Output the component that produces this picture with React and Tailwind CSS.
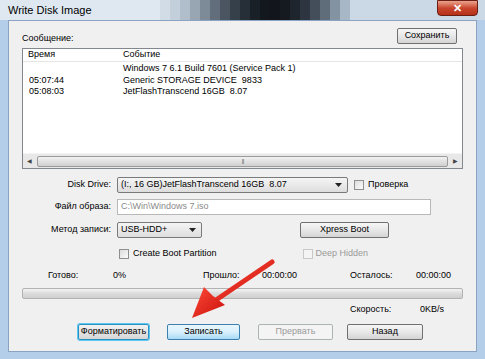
import React from 'react';

const font = { fontFamily: '"Liberation Sans", Arial, sans-serif' };

// glass title bar over a dark desktop, built from thin solid strips
const titleStrips = [
  'bg-[#d2dce7]', 'bg-[#c3cfdb]', 'bg-[#b0bdca]', 'bg-[#98a5b3]', 'bg-[#7d8a98]',
  'bg-[#626e7b]', 'bg-[#4a5561]', 'bg-[#36404a]', 'bg-[#262e37]', 'bg-[#1a2027]',
  'bg-[#13181e]', 'bg-[#12161c]', 'bg-[#151a20]', 'bg-[#1e252d]', 'bg-[#2d3640]',
  'bg-[#434e5a]', 'bg-[#5f6c7a]', 'bg-[#8493a2]', 'bg-[#a8b7c6]',
];

function Btn({ children, className = '', disabled, focused, hot }) {
  let look = 'border-[#707070] bg-gradient-to-b from-[#f6f6f6] via-[#e8e8e8] to-[#d4d4d4] text-black';
  if (disabled) look = 'border-[#adb2b5] bg-[#f4f4f4] text-[#9a9a9a]';
  if (hot) look = 'border-[#3c7fb1] bg-gradient-to-b from-[#eaf6fd] via-[#d9f0fc] to-[#a7d9f5] text-black';
  if (focused) look = 'border-[#2b8fc7] bg-gradient-to-b from-[#f2f2f2] to-[#d6d6d6] text-black ring-1 ring-[#5ec8ee]';
  return (
    <div className={`h-[16px] flex items-center justify-center rounded-[2px] border text-[9px] ${look} ${className}`}>
      {children}
    </div>
  );
}

function Check({ disabled }) {
  return (
    <div className={`w-[10px] h-[10px] border ${disabled ? 'border-[#c8c8c8] bg-[#f4f4f4]' : 'border-[#8e8f8f] bg-gradient-to-br from-[#dcdcdc] to-[#fbfbfb]'}`} />
  );
}

function Caret() {
  return (
    <svg width="7" height="4" viewBox="0 0 7 4"><path d="M0 0h7L3.5 4z" fill="#222" /></svg>
  );
}

export default function App() {
  return (
    <div style={font} className="relative w-[485px] h-[359px] overflow-hidden flex flex-col bg-[#b4cde8] text-black">
      {/* title bar */}
      <div className="h-[20px] shrink-0 flex items-stretch">
        <div className="w-[160px] shrink-0 flex items-center pl-[8px] bg-[#dfe8f1]">
          <span className="text-[11px] text-black whitespace-nowrap">Write Disk Image</span>
        </div>
        {titleStrips.map((c, i) => (
          <div key={i} className={`w-[10px] shrink-0 ${c}`} />
        ))}
        <div className="flex-1 bg-[#cbd9e7]" />
      </div>
      <div className="absolute right-[7px] top-0 w-[41px] h-[16px] rounded-b-[4px] border border-[#6b1e14] bg-gradient-to-b from-[#e9a28f] via-[#c9452d] to-[#b53118] flex items-center justify-center">
        <span className="text-white text-[11px] font-bold leading-none">✕</span>
      </div>

      {/* body */}
      <div className="flex-1 mx-[8px] mb-[7px] bg-[#f0f0f0] border border-[#8aa3c0] pl-[13px] pr-[13px] flex flex-col text-[9px]">
        <div className="mt-[7px] h-[16px] flex items-end justify-between">
          <span className="leading-none mb-[1px]">Сообщение:</span>
          <Btn className="w-[60px] mr-[6px]">Сохранить</Btn>
        </div>

        {/* list */}
        <div className="mt-[4px] h-[121px] border border-[#828790] bg-white flex flex-col">
          <div className="h-[13px] flex items-center border-b border-[#e5e5e5]">
            <span className="w-[100px] pl-[5px]">Время</span>
            <span>Событие</span>
          </div>
          <div className="pt-[1px] flex-1 leading-[11.5px]">
            <div className="flex"><span className="w-[100px] pl-[6px]"></span><span>Windows 7 6.1 Build 7601 (Service Pack 1)</span></div>
            <div className="flex"><span className="w-[100px] pl-[6px]">05:07:44</span><span className="whitespace-pre">Generic STORAGE DEVICE  9833</span></div>
            <div className="flex"><span className="w-[100px] pl-[6px]">05:08:03</span><span className="whitespace-pre">JetFlashTranscend 16GB  8.07</span></div>
          </div>
          <div className="h-[15px] flex items-center bg-[#e8e8e8] border-t border-[#f4f4f4]">
            <span className="w-[13px] text-center text-[6px] text-[#444]">◀</span>
            <div className="flex-1 h-[11px] mx-[1px] rounded-[2px] border border-[#9a9a9a] bg-gradient-to-b from-[#f2f2f2] to-[#d0d0d0] flex items-center justify-center">
              <span className="text-[6px] text-[#777] tracking-[-1px]">|||</span>
            </div>
            <span className="w-[13px] text-center text-[6px] text-[#444]">▶</span>
          </div>
        </div>

        {/* form */}
        <div className="mt-[8px] h-[16px] flex items-center">
          <span className="w-[90px] text-right pr-[1px]">Disk Drive:</span>
          <div className="ml-[5px] w-[231px] h-[16px] border border-[#7a7a7a] rounded-[2px] bg-gradient-to-b from-[#f5f5f5] to-[#dddddd] flex items-center pl-[3px] pr-[5px] justify-between">
            <span className="whitespace-pre">(I:, 16 GB)JetFlashTranscend 16GB  8.07</span>
            <Caret />
          </div>
          <div className="ml-[6px]"><Check /></div>
          <span className="ml-[4px]">Проверка</span>
        </div>

        <div className="mt-[6px] h-[16px] flex items-center">
          <span className="w-[90px] text-right pr-[1px]">Файл образа:</span>
          <div className="ml-[5px] w-[314px] h-[16px] border border-[#b8b8b8] bg-white flex items-center pl-[3px] text-[#8a8a8a]">
            C:\Win\Windows 7.iso
          </div>
        </div>

        <div className="mt-[7px] h-[16px] flex items-center">
          <span className="w-[90px] text-right pr-[1px]">Метод записи:</span>
          <div className="ml-[5px] w-[85px] h-[16px] border border-[#7a7a7a] rounded-[2px] bg-gradient-to-b from-[#f5f5f5] to-[#dddddd] flex items-center pl-[3px] pr-[5px] justify-between">
            <span>USB-HDD+</span>
            <Caret />
          </div>
          <Btn className="ml-[98px] w-[89px] h-[15px]">Xpress Boot</Btn>
        </div>

        <div className="mt-[10px] h-[11px] flex items-center">
          <div className="ml-[97px]"><Check /></div>
          <span className="ml-[4px]">Create Boot Partition</span>
          <div className="ml-[86px]"><Check disabled /></div>
          <span className="ml-[3px] text-[#9a9a9a]">Deep Hidden</span>
        </div>

        {/* status */}
        <div className="mt-[12px] h-[10px] flex items-center">
          <span className="ml-[26px] w-[65px]">Готово:</span>
          <span className="w-[90px]">0%</span>
          <span className="w-[59px]">Прошло:</span>
          <span className="w-[88px]">00:00:00</span>
          <span className="w-[66px]">Осталось:</span>
          <span>00:00:00</span>
        </div>

        <div className="mt-[7px] h-[11px] rounded-[2px] border border-[#b2b2b2] bg-gradient-to-b from-[#f3f3f3] via-[#dcdcdc] to-[#cfcfcf]" />

        <div className="mt-[6px] h-[10px] flex items-center">
          <span className="ml-[328px] w-[70px]">Скорость:</span>
          <span>0KB/s</span>
        </div>

        <div className="mt-[9px] flex items-center">
          <Btn focused className="ml-[56px] w-[71px]">Форматировать</Btn>
          <Btn hot className="ml-[18px] w-[73px]">Записать</Btn>
          <Btn disabled className="ml-[18px] w-[75px]">Прервать</Btn>
          <Btn className="ml-[14px] w-[76px]">Назад</Btn>
        </div>
      </div>

      {/* red arrow overlay */}
      <svg className="absolute left-0 top-0 pointer-events-none" width="485" height="359" viewBox="0 0 485 359">
        <defs>
          <linearGradient id="ar" x1="0" y1="0" x2="1" y2="1">
            <stop offset="0" stopColor="#ff4a3a" />
            <stop offset="1" stopColor="#c8100a" />
          </linearGradient>
        </defs>
        <path d="M272 262 L216 300" stroke="url(#ar)" strokeWidth="5" strokeLinecap="round" />
        <path d="M192 318 L204 287 L213 296 L225 305 Z" fill="url(#ar)" />
      </svg>
    </div>
  );
}
